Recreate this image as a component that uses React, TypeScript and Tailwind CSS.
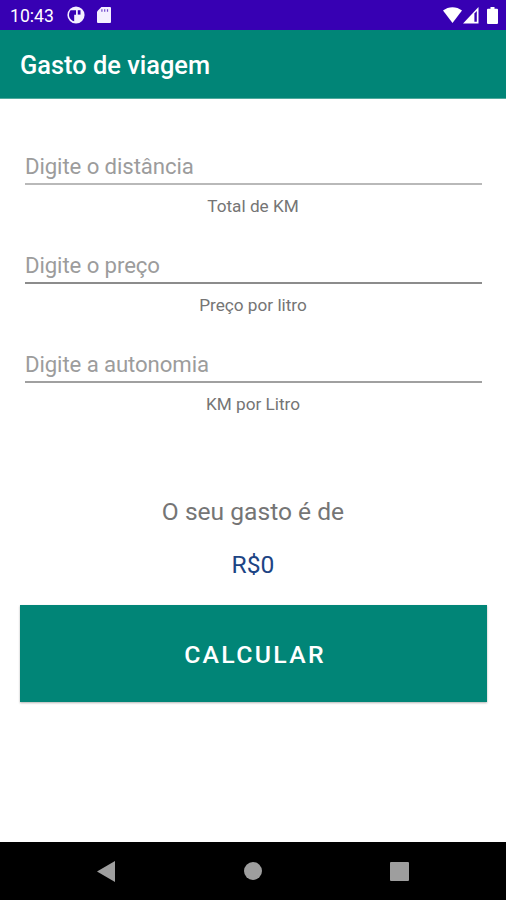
interface FieldProps {
  hint: string;
  label: string;
  line: string;
}

function Field({ hint, label, line }: FieldProps) {
  return (
    <div className="h-[99px]">
      <div className={`ml-[5px] mr-1 h-[33px] border-b-2 ${line}`}>
        <p className="text-[22.2px] leading-[29px] tracking-[-0.1px] text-[#9c9c9c]">{hint}</p>
      </div>
      <p className="mt-[9px] text-center text-[17.2px] leading-6 text-[#757575]">{label}</p>
    </div>
  );
}

function StatusBar() {
  return (
    <div className="flex h-[30px] items-center bg-[#3700b3] pl-[10px] pr-[8px] text-white">
      <span className="text-[17.6px] leading-[30px] pt-[2px]">10:43</span>
      <svg className="ml-[13px]" width="18" height="18" viewBox="0 0 18 18">
        <circle cx="9" cy="9" r="8.6" fill="#f4f0ff" />
        <path d="M3.6 4.2H9v4.6H7.2v6.4C4.4 14.6 2 12 2 9c0-1.800.6-3.500 1.600-4.800z" fill="#3700b3" />
        <path d="M10.8 4.2h2.700v4.400h-2.700z" fill="#3700b3" />
      </svg>
      <svg className="ml-[12px]" width="14" height="16" viewBox="0 0 14 16">
        <path d="M4.4 0H13a1 1 0 0 1 1 1v14a1 1 0 0 1-1 1H1a1 1 0 0 1-1-1V4.500z" fill="#f4f0ff" />
        <path d="M4.900 2.300v2.500M7.700 2.300v2.500M10.500 2.300v2.500" stroke="#3700b3" strokeOpacity="0.7" strokeWidth="1.2" />
      </svg>
      <div className="ml-auto flex items-center">
        <svg width="19" height="16" viewBox="0 0 19 16">
          <path d="M0 3.6C5.5-1 13.5-1 19 3.6L9.5 16z" fill="#fff" />
        </svg>
        <svg className="ml-[1px]" width="16" height="17" viewBox="0 0 16 17">
          <path d="M0 16.5 15.5 0v16.5z" fill="#fff" />
          <path d="M11.4 6.5 13.8 4v10.8h-2.4z" fill="#3700b3" />
        </svg>
        <svg className="ml-[8px]" width="11" height="17" viewBox="0 0 11 17">
          <path d="M3.5 0h4v1.7H10a1 1 0 0 1 1 1V16a1 1 0 0 1-1 1H1a1 1 0 0 1-1-1V2.7a1 1 0 0 1 1-1h2.5z" fill="#fff" />
        </svg>
      </div>
    </div>
  );
}

function NavigationBar() {
  return (
    <div className="flex h-[58px] items-center justify-between bg-black pl-[97px] pr-[97px]">
      <svg width="18" height="21" viewBox="0 0 18 21">
        <path d="M0 10.5 18 0v21z" fill="#9e9e9e" />
      </svg>
      <div className="size-[18px] rounded-full bg-[#9e9e9e]" />
      <div className="size-[19px] rounded-[1px] bg-[#9e9e9e]" />
    </div>
  );
}

export default function App() {
  return (
    <div className="flex h-[900px] w-[506px] flex-col bg-white font-['Roboto',sans-serif]">
      <StatusBar />

      {/* App bar */}
      <header className="flex h-[69px] items-center border-b border-[#4fa99d] bg-[#018577] px-5">
        <h1 className="pt-[3px] text-[25.4px] font-medium text-white">Gasto de viagem</h1>
      </header>

      {/* Form */}
      <main className="flex flex-1 flex-col px-5 pt-[53px]">
        <Field hint="Digite o distância" label="Total de KM" line="border-[#b9b9b9]" />
        <Field hint="Digite o preço" label="Preço por litro" line="border-[#8c8c8c]" />
        <Field hint="Digite a autonomia" label="KM por Litro" line="border-[#a0a0a0]" />

        {/* Result */}
        <p className="mt-[47px] text-center text-[24.6px] leading-8 text-[#757575]">O seu gasto é de</p>
        <p className="mt-[21px] text-center text-[24.6px] leading-8 text-[#1d4484]">R$0</p>

        <button className="mt-6 h-[97px] w-[467px] bg-[#018577] pt-[3px] pl-[3px] text-[24.8px] font-medium tracking-[2.3px] text-white shadow-[0_1px_2px_rgba(0,0,0,0.3)]">
          CALCULAR
        </button>
      </main>

      <NavigationBar />
    </div>
  );
}
